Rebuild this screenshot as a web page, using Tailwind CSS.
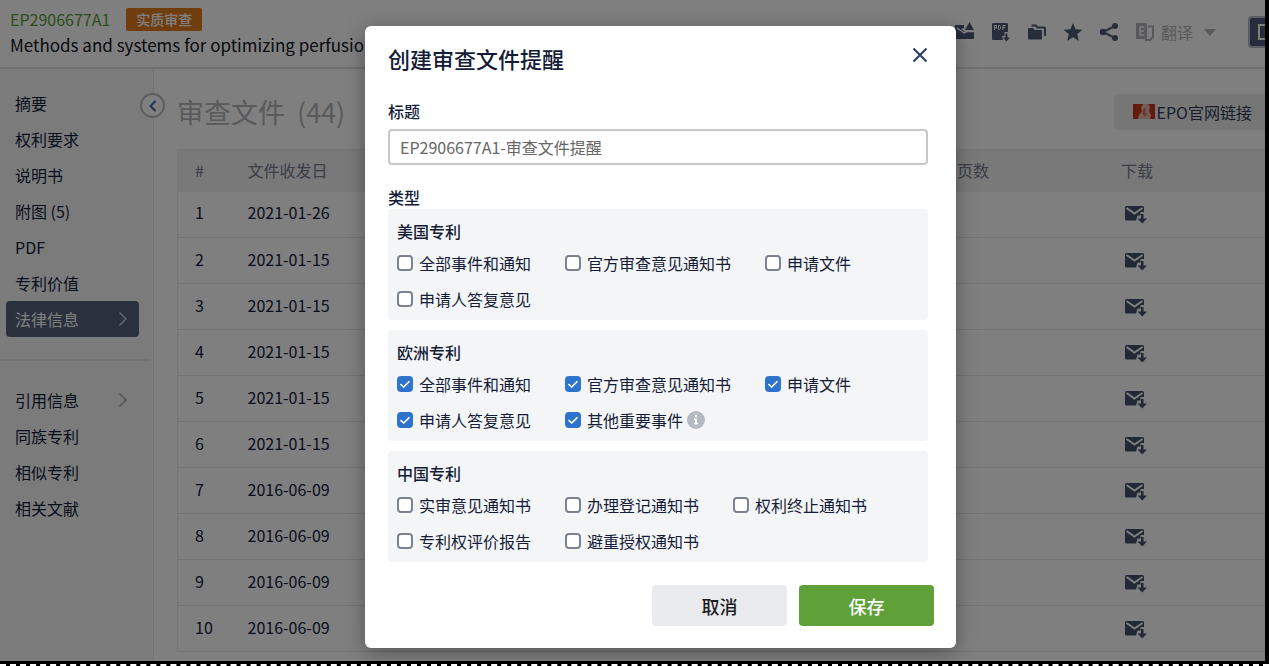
<!DOCTYPE html>
<html lang="zh-CN">

<head>
    <meta charset="utf-8">
    <title>EP2906677A1 - 审查文件</title>
    <meta content="width=device-width, initial-scale=1.0" name="viewport">

    <!-- Tailwind CSS -->
    <script src="https://cdn.jsdelivr.net/npm/@tailwindcss/browser@4"></script>
</head>

<body class="h-screen flex flex-col overflow-hidden bg-black font-['Noto_Sans_CJK_SC',sans-serif] text-base leading-6 text-[#141c38]">

    <!-- Shared icons -->
    <svg class="hidden">
        <symbol id="icon-mail" viewBox="0 0 22 18">
            <path fill="currentColor" d="M1.5 0h16A1.5 1.5 0 0 1 19 1.5V6h-3.500v3.500H12.500L11 14.500H1.500A1.500 1.500 0 0 1 0 13V1.500A1.500 1.500 0 0 1 1.500 0Z" />
            <path fill="none" stroke="#fff" stroke-width="2" d="M1.500 2 9.500 7.500 17.500 2" />
            <path fill="currentColor" d="M16 8h2.500v4.500H22L17.250 17.500 12.500 12.500H16Z" />
        </symbol>
        <symbol id="icon-check" viewBox="0 0 16 16">
            <path fill="none" stroke="#fff" stroke-width="1.600" d="M3.500 8.200 6.700 11 12.500 5.200" />
        </symbol>
        <symbol id="icon-right" viewBox="0 0 10 16">
            <path fill="none" stroke="currentColor" stroke-width="1.600" d="M1.500 1.500 8 8 1.500 14.500" />
        </symbol>
    </svg>

    <div class="relative flex-1 min-h-0 mr-1 flex flex-col overflow-hidden bg-white">

        <!-- Header Start -->
        <header class="flex items-center h-[69px] shrink-0 pl-[10px] pb-[3px] border-b-2 border-[#e0e0e0]">
            <div>
                <div class="flex items-center gap-4 h-6">
                    <a href="#" class="text-[#5c9c38]">EP2906677A1</a>
                    <span class="px-[10px] h-[23px] leading-[22px] rounded-xs bg-[#e07a1c] text-white text-sm font-medium">实质审查</span>
                </div>
                <h1 class="mt-[2px] whitespace-nowrap text-[17px] text-[#101420]">Methods and systems for optimizing perfusion</h1>
            </div>
            <div class="ml-auto flex items-center gap-4 text-[#4f5a76]">
                <button aria-label="图片">
                    <svg class="size-5" viewBox="0 0 20 20" fill="currentColor"><path d="M0 3h9v3l-3 1 4 3 9-1v7a1 1 0 0 1-1 1H1a1 1 0 0 1-1-1Z" /><path d="m14.500 0 4.500 8h-9Z" /><path fill="none" stroke="#fff" stroke-width="1.500" d="m2 6 7 5 3-1.500h8" /></svg>
                </button>
                <button aria-label="PDF">
                    <svg class="size-5" viewBox="0 0 20 20"><path fill="currentColor" d="M2 1h14a1 1 0 0 1 1 1v8h-3.500v4H11l1 4H2a1 1 0 0 1-1-1V2a1 1 0 0 1 1-1Z" /><path fill="none" stroke="#fff" d="M3.500 8V3.500h2v2.500h-2M7.500 3.500h1l1 1v2l-1 1h-1ZM12 8V3.500h2.500M12 5.500h2" /><path fill="currentColor" d="M14.500 11.500h2v4H19l-3.500 4-3.500-4h2.500Z" /></svg>
                </button>
                <button aria-label="文件夹">
                    <svg class="size-5" viewBox="0 0 20 20"><path fill="currentColor" d="M2 6h4l1.500 2H14a1 1 0 0 1 1 1v7.500a1 1 0 0 1-1 1H2a1 1 0 0 1-1-1V7a1 1 0 0 1 1-1Z" /><path fill="none" stroke="currentColor" stroke-width="2" d="M4.500 3.500H9l1.500 2H17a1 1 0 0 1 1 1V14" /></svg>
                </button>
                <button aria-label="收藏">
                    <svg class="size-5" viewBox="0 0 20 20" fill="currentColor"><path d="m10 1 2.600 6.300 6.800.5-5.200 4.400 1.700 6.700L10 15.300l-5.900 3.600 1.700-6.700L.600 7.800l6.800-.5Z" /></svg>
                </button>
                <button aria-label="分享">
                    <svg class="size-5" viewBox="0 0 20 20" fill="currentColor"><circle cx="4" cy="10" r="3.200" /><circle cx="16" cy="4" r="3" /><circle cx="16" cy="16" r="3" /><path fill="none" stroke="currentColor" stroke-width="2" d="M16 4 4 10l12 6" /></svg>
                </button>
                <button class="flex items-center gap-[6px] text-[#b2b2b6]">
                    <svg class="size-5" viewBox="0 0 20 20"><path fill="currentColor" d="M2 1h9a1 1 0 0 1 1 1v14a1 1 0 0 1-1 1H2a1 1 0 0 1-1-1V2a1 1 0 0 1 1-1Z" /><path fill="none" stroke="#fff" stroke-width="1.500" d="M9.500 5H5v8h4.500M5 9h4" /><path fill="none" stroke="currentColor" stroke-width="2" d="M13 4.500h5V15l-3 3h-5" /></svg>
                    翻译
                    <svg class="ml-[5px] w-3 h-[7px]" viewBox="0 0 12 7" fill="currentColor"><path d="M0 0h12L6 7Z" /></svg>
                </button>
                <button aria-label="面板" class="ml-4 flex items-center w-[17px] h-8 pl-2 overflow-hidden rounded-l border-2 border-r-0 border-[#b4bac8] bg-[#4f5a76]">
                    <span class="w-4 h-4 shrink-0 border-2 border-white"></span>
                </button>
            </div>
        </header>
        <!-- Header End -->

        <div class="flex flex-1 min-h-0">
            <!-- Sidebar Start -->
            <nav class="relative w-[154px] shrink-0 pt-4 bg-[#f7f7f8] border-r border-[#e6e6e8]">
                <div class="flex flex-col px-[6px] mr-2">
                    <a href="#" class="h-9 px-[9px] flex items-center">摘要</a>
                    <a href="#" class="h-9 px-[9px] flex items-center">权利要求</a>
                    <a href="#" class="h-9 px-[9px] flex items-center">说明书</a>
                    <a href="#" class="h-9 px-[9px] flex items-center">附图 (5)</a>
                    <a href="#" class="h-9 px-[9px] flex items-center">PDF</a>
                    <a href="#" class="h-9 px-[9px] flex items-center">专利价值</a>
                    <a href="#" class="h-9 px-[9px] flex items-center justify-between rounded bg-[#56617c] text-white">法律信息
                        <svg class="mr-[2px] w-[10px] h-4 text-[#c4c8d4]"><use href="#icon-right" /></svg></a>
                </div>
                <hr class="mt-[22px] mb-[21px] mr-1 border-t-2 border-[#e6e6e8]">
                <div class="flex flex-col px-[6px] mr-2">
                    <a href="#" class="h-9 px-[9px] flex items-center justify-between">引用信息
                        <svg class="mr-[2px] w-[10px] h-4 text-[#a4a6ae]"><use href="#icon-right" /></svg></a>
                    <a href="#" class="h-9 px-[9px] flex items-center">同族专利</a>
                    <a href="#" class="h-9 px-[9px] flex items-center">相似专利</a>
                    <a href="#" class="h-9 px-[9px] flex items-center">相关文献</a>
                </div>
                <button aria-label="收起" class="absolute top-6 -right-3 size-[25px] flex items-center justify-center rounded-full border-2 border-[#bcbcc0] bg-white text-[#3c66b0]">
                    <svg class="w-2 h-3" viewBox="0 0 8 12"><path fill="none" stroke="currentColor" stroke-width="2" d="M6.500 1 1.500 6l5 5" /></svg>
                </button>
            </nav>
            <!-- Sidebar End -->

            <!-- Documents Start -->
            <main class="flex-1 min-w-0 pl-[23px]">
                <div class="flex items-center justify-between h-[80px] pt-[5px]">
                    <h2 class="flex gap-3 text-[27px] leading-10 text-[#b4b4b8]">审查文件 <span>(44)</span></h2>
                    <a href="#" class="flex items-center gap-[2px] h-9 pl-[19px] pr-[13px] rounded-l bg-[#ececee] text-[#343c58]">
                        <svg class="w-[22px] h-[15px]" viewBox="0 0 22 15"><path fill="#c8341c" d="M0 0h22v15H0Z" /><path fill="#e8b8ac" d="M10 0h5l2 3-1 4 2 4-1 4H5l1-4 3-4-1-3Z" /><path fill="#d8705c" d="m11 4 2 1-1 3 3 3-4 1-2-3Z" /></svg>
                        EPO官网链接
                    </a>
                </div>
                <table class="w-full table-fixed text-left border-l border-[#ececee]">
                    <thead class="bg-[#f2f2f3] text-[#787c8c]">
                        <tr class="h-[42px] border-t border-[#ececee]">
                            <th class="w-[53px] pl-[17px] pb-[2px] font-normal">#</th>
                            <th class="pl-[17px] pb-[2px] font-normal">文件收发日</th>
                            <th class="w-[165px] pl-[18px] pb-[2px] font-normal">页数</th>
                            <th class="w-[161px] pl-[17px] pb-[2px] font-normal">下载</th>
                        </tr>
                    </thead>
                    <tbody id="doc-rows"></tbody>
                </table>
            </main>
            <!-- Documents End -->
        </div>

        <!-- Modal Start -->
        <div class="absolute inset-0 z-10 flex items-start justify-center pt-[26px] pl-14 bg-black/50">
            <form role="dialog" aria-labelledby="modal-title" class="w-[591px] pt-4 pb-[22px] pl-[23px] pr-[22px] rounded-md bg-white text-[#141c38] shadow-[0_4px_20px_rgba(0,0,0,0.35)]">
                <div class="flex items-start justify-between">
                    <h2 id="modal-title" class="text-[22px] leading-8 font-medium">创建审查文件提醒</h2>
                    <button type="button" aria-label="关闭" class="mt-[5px] mr-[6px] text-[#2c3a60]">
                        <svg class="size-4" viewBox="0 0 16 16"><path fill="none" stroke="currentColor" stroke-width="2" d="m1.500 1.500 13 13M14.500 1.500l-13 13" /></svg>
                    </button>
                </div>

                <div class="mt-[25px] mr-[6px]">
                    <label for="title" class="block font-medium">标题</label>
                    <input id="title" type="text" value="EP2906677A1-审查文件提醒" class="mt-[6px] w-full h-9 px-[10px] rounded border-2 border-[#c8c8cb] text-[#666]">
                    <p class="mt-5 font-medium">类型</p>
                    <div id="type-groups" class="flex flex-col gap-[10px]"></div>
                </div>

                <div class="mt-[23px] flex justify-end gap-3">
                    <button type="button" class="w-[135px] h-[41px] rounded bg-[#e9eaee] text-lg font-medium text-[#1c1c20]">取消</button>
                    <button type="submit" class="w-[135px] h-[41px] rounded bg-[#5fa038] text-lg font-medium text-white">保存</button>
                </div>
            </form>
        </div>
        <!-- Modal End -->
    </div>

    <!-- Bottom edge -->
    <div class="h-[5px] shrink-0 border-b-2 border-dashed border-white"></div>

    <script>
        const dates = [
            "2021-01-26", "2021-01-15", "2021-01-15", "2021-01-15", "2021-01-15",
            "2021-01-15", "2016-06-09", "2016-06-09", "2016-06-09", "2016-06-09"
        ];

        const groups = [
            { name: "美国专利", checked: false, items: ["全部事件和通知", "官方审查意见通知书", "申请文件", "申请人答复意见"] },
            { name: "欧洲专利", checked: true, items: ["全部事件和通知", "官方审查意见通知书", "申请文件", "申请人答复意见", "其他重要事件"] },
            { name: "中国专利", checked: false, items: ["实审意见通知书", "办理登记通知书", "权利终止通知书", "专利权评价报告", "避重授权通知书"] }
        ];

        const info = `<svg class="size-[18px] -ml-[2px]" viewBox="0 0 18 18"><circle cx="9" cy="9" r="9" fill="#b4bac2" /><path fill="#fff" d="M8 4h2v2H8ZM7 7.500h3V12h1v1.500H7V12h1V9H7Z" /></svg>`;

        document.getElementById("doc-rows").innerHTML = dates.map((date, i) => `
            <tr class="h-[46px] border-b border-[#e6e6e8]">
                <td class="pl-[17px] pb-1">${i + 1}</td>
                <td class="pl-[17px] pb-1">${date}</td>
                <td></td>
                <td class="pl-[21px]"><button aria-label="下载" class="block mt-[2px] text-[#47516c]"><svg class="w-[22px] h-[18px]"><use href="#icon-mail" /></svg></button></td>
            </tr>`).join("");

        document.getElementById("type-groups").innerHTML = groups.map(group => `
            <fieldset class="pt-[10px] pb-[9px] pl-[9px] rounded bg-[#f4f5f7]">
                <legend class="float-left w-full font-medium">${group.name}</legend>
                <div class="clear-both pt-2 flex flex-wrap gap-x-[34px] gap-y-3">
                    ${group.items.map(item => `
                        <label class="flex items-center gap-[6px] whitespace-nowrap">
                            <span class="grid">
                                <input type="checkbox" ${group.checked ? "checked" : ""} class="peer col-start-1 row-start-1 appearance-none size-4 rounded border-2 border-[#7c8290] bg-white checked:border-[#2f74cc] checked:bg-[#2f74cc]">
                                <svg class="col-start-1 row-start-1 size-4 pointer-events-none invisible peer-checked:visible"><use href="#icon-check" /></svg>
                            </span>
                            ${item}${item === "其他重要事件" ? info : ""}
                        </label>`).join("")}
                </div>
            </fieldset>`).join("");
    </script>
</body>

</html>
